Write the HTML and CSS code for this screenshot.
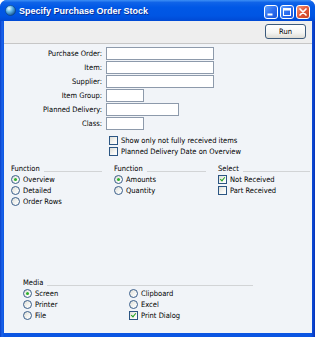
FILE: index.html
```html
<!DOCTYPE html>
<html>
<head>
  <meta charset="UTF-8">
  <title>Specify Purchase Order Stock</title>
  <link rel="stylesheet" href="styles.css">
</head>
<body>
  <div class="window">
    <div class="titlebar">
      <svg class="app-icon" width="11" height="11" viewBox="0 0 11 11">
        <defs>
          <radialGradient id="globe" cx="0.35" cy="0.3" r="0.75">
            <stop offset="0" stop-color="#e8fbff"/>
            <stop offset="0.45" stop-color="#5fb6e8"/>
            <stop offset="1" stop-color="#12508f"/>
          </radialGradient>
        </defs>
        <circle cx="5.5" cy="5.5" r="5" fill="url(#globe)" stroke="#0b3f7a" stroke-width="0.6"/>
      </svg>
      <span class="title">Specify Purchase Order Stock</span>
      <div class="caption-buttons">
        <span class="cap-btn">
          <svg width="14" height="14" viewBox="0 0 14 14"><rect x="3.5" y="8.5" width="5" height="2" fill="#fff"/></svg>
        </span>
        <span class="cap-btn">
          <svg width="14" height="14" viewBox="0 0 14 14"><rect x="3.5" y="3.5" width="7" height="7" fill="none" stroke="#fff" stroke-width="1"/><rect x="3.5" y="3.5" width="7" height="2" fill="#fff"/></svg>
        </span>
        <span class="cap-btn close">
          <svg width="14" height="14" viewBox="0 0 14 14"><path d="M4 4 L10 10 M10 4 L4 10" stroke="#fff" stroke-width="1.7" stroke-linecap="round"/></svg>
        </span>
      </div>
    </div>

    <div class="client">
      <div class="toolbar">
        <button class="run">Run</button>
      </div>

      <div class="content">
        <div class="fields">
          <label>Purchase Order:</label><span class="input"></span>
          <label>Item:</label><span class="input"></span>
          <label>Supplier:</label><span class="input"></span>
          <label>Item Group:</label><span class="input short"></span>
          <label>Planned Delivery:</label><span class="input mid"></span>
          <label>Class:</label><span class="input short"></span>
        </div>

        <div class="options">
          <div class="opt"><span class="box"></span>Show only not fully received items</div>
          <div class="opt"><span class="box"></span>Planned Delivery Date on Overview</div>
        </div>

        <div class="groups">
          <div class="group">
            <div class="group-head">Function</div>
            <div class="opt"><span class="radio on"></span>Overview</div>
            <div class="opt"><span class="radio"></span>Detailed</div>
            <div class="opt"><span class="radio"></span>Order Rows</div>
          </div>
          <div class="group">
            <div class="group-head">Function</div>
            <div class="opt"><span class="radio on"></span>Amounts</div>
            <div class="opt"><span class="radio"></span>Quantity</div>
          </div>
          <div class="group last">
            <div class="group-head">Select</div>
            <div class="opt"><span class="box checked"></span>Not Received</div>
            <div class="opt"><span class="box"></span>Part Received</div>
          </div>
        </div>

        <div class="media">
          <div class="group-head">Media</div>
          <div class="media-grid">
            <div class="opt"><span class="radio on"></span>Screen</div>
            <div class="opt"><span class="radio"></span>Printer</div>
            <div class="opt"><span class="radio"></span>File</div>
            <div class="opt"><span class="radio"></span>Clipboard</div>
            <div class="opt"><span class="radio"></span>Excel</div>
            <div class="opt"><span class="box checked"></span>Print Dialog</div>
          </div>
        </div>
      </div>
    </div>
  </div>
</body>
</html>
```

FILE: styles.css
```css
* {
  box-sizing: border-box;
}
body {
  margin: 0;
  font-family: "DejaVu Sans Condensed", "DejaVu Sans", sans-serif;
  font-size: 7.5px;
  color: #000;
}
.window {
  width: 315px;
  height: 337px;
  display: flex;
  flex-direction: column;
  background: linear-gradient(to right, #0a3fc8 0, #1b63ea 2px, #0b55e2 4px, #0b55e2 311px, #0a45d0 313px, #0832b8 315px);
  border-radius: 7px 7px 0 0;
  overflow: hidden;
}
.titlebar {
  height: 21px;
  display: flex;
  align-items: center;
  padding: 0 5px 0 5px;
  background: linear-gradient(to bottom, #3d8ff5 0%, #0f63e8 12%, #0058e6 35%, #0055e3 75%, #0049d4 100%);
}
.app-icon {
  margin-right: 3px;
}
.title {
  flex: 1;
  color: #fff;
  font-family: "Liberation Sans", sans-serif;
  font-weight: bold;
  font-size: 9px;
  text-shadow: 1px 1px 0 #0c2f96;
}
.caption-buttons {
  display: flex;
  gap: 2px;
  margin-top: 2px;
}
.cap-btn {
  width: 14px;
  height: 14px;
  border: 1px solid #fff;
  border-radius: 3px;
  background: linear-gradient(135deg, #5fa0fb 0%, #2d6ff0 50%, #1b55d9 100%);
  display: flex;
}
.cap-btn svg {
  margin: -1px;
}
.cap-btn.close {
  background: linear-gradient(135deg, #f29879 0%, #e1583a 50%, #c7401f 100%);
}
.client {
  flex: 1;
  margin: 0 3px 4px 4px;
  display: flex;
  flex-direction: column;
}
.toolbar {
  height: 23px;
  padding: 3px 6px 0 0;
  display: flex;
  justify-content: flex-end;
  align-items: flex-start;
  background: #eeeeee;
  border-bottom: 1px solid #c6c6c6;
}
.run {
  width: 41px;
  height: 15px;
  padding: 0;
  font-family: inherit;
  font-size: 7.5px;
  color: #000;
  border: 1px solid #3c5a7c;
  border-radius: 3px;
  background: linear-gradient(to bottom, #ffffff 0%, #f4f4f2 60%, #dedcd4 100%);
}
.content {
  flex: 1;
  background: #f1f4f8;
  padding-top: 3px;
}
.fields {
  display: grid;
  grid-template-columns: 98px 108px;
  grid-auto-rows: 13px;
  column-gap: 4px;
  row-gap: 1px;
}
.fields label {
  text-align: right;
  line-height: 13px;
}
.input {
  background: #fff;
  border: 1px solid #8d9aab;
}
.input.short {
  width: 38px;
}
.input.mid {
  width: 73px;
}
.options {
  margin-top: 5px;
  padding-left: 105px;
}
.opt {
  height: 11px;
  display: flex;
  align-items: center;
  white-space: nowrap;
}
.box,
.radio {
  width: 9px;
  height: 9px;
  margin-right: 3px;
  flex-shrink: 0;
  background: linear-gradient(135deg, #dcdcd5 0%, #f6f6f3 60%, #ffffff 100%);
  border: 1px solid #2b5583;
  position: relative;
}
.radio {
  border-radius: 50%;
  border-color: #3a5e8a;
}
.radio.on::after {
  content: "";
  position: absolute;
  left: 2px;
  top: 2px;
  width: 3px;
  height: 3px;
  border-radius: 50%;
  background: #2eb12e;
}
.box.checked::after {
  content: "";
  position: absolute;
  left: 2px;
  top: 0;
  width: 2px;
  height: 4px;
  border: solid #21a121;
  border-width: 0 1.5px 1.5px 0;
  transform: rotate(40deg);
}
.groups {
  margin-top: 6px;
  padding-left: 7px;
  display: grid;
  grid-template-columns: 103px 104px 1fr;
}
.group {
  padding-right: 12px;
}
.group.last {
  padding-right: 2px;
}
.group-head {
  height: 11px;
  display: flex;
  align-items: center;
}
.group-head::after {
  content: "";
  flex: 1;
  margin: 5px 0 0 4px;
  border-top: 1px solid #d2d4d6;
}
.media {
  margin-top: 70px;
  margin-left: 19px;
  width: 230px;
}
.media-grid {
  display: grid;
  grid-template-columns: 106px 1fr;
  grid-template-rows: repeat(3, 11px);
  grid-auto-flow: column;
}
```
